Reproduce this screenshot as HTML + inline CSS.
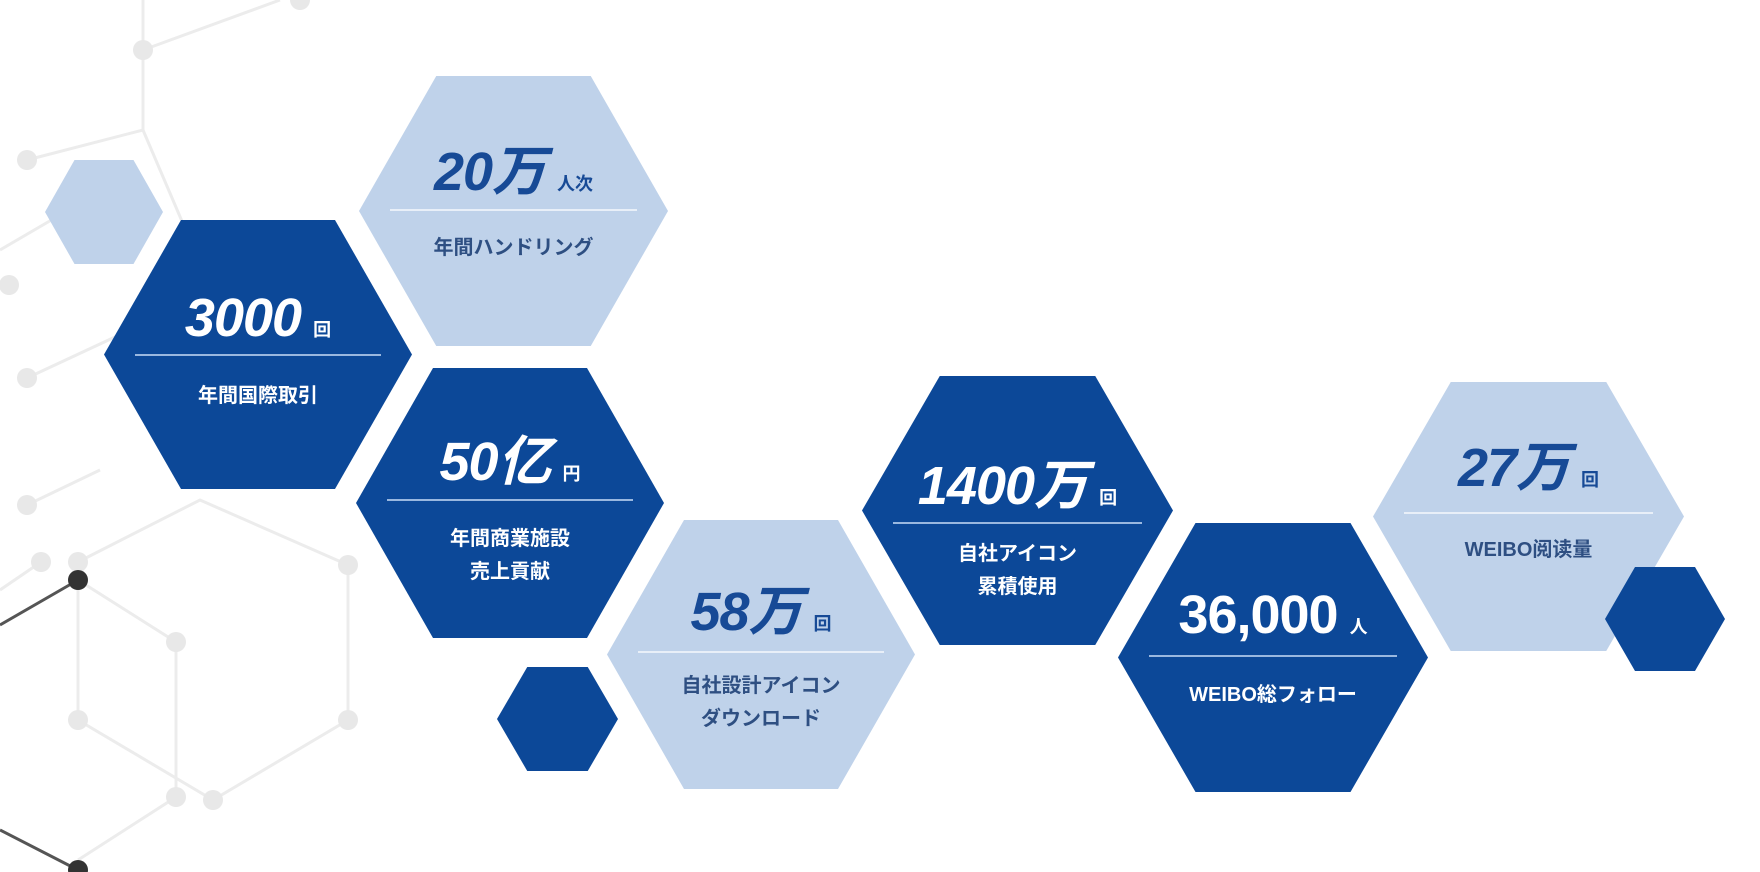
<!DOCTYPE html>
<html><head><meta charset="utf-8"><style>
html,body{margin:0;padding:0;background:#fff;}
body{width:1760px;height:872px;position:relative;overflow:hidden;font-family:"Liberation Sans","Noto Sans CJK JP",sans-serif;}
.h{position:absolute;clip-path:polygon(25% 0,75% 0,100% 50%,75% 100%,25% 100%,0 50%);}
.d{background:#0c4898;color:#fff;}
.l{background:#bfd2ea;color:#1b4a94;}
.n{position:absolute;left:0;right:0;text-align:center;font-weight:bold;font-style:italic;font-size:54px;line-height:60px;letter-spacing:-1px;}
.n small{font-size:18px;font-style:normal;font-weight:bold;margin-left:12px;letter-spacing:0;}
.ln{position:absolute;left:10%;right:10%;height:2px;}
.d .ln{background:#9ab8e0;}
.l .ln{background:#e8eff8;}
.t{position:absolute;left:0;right:0;text-align:center;font-size:20px;line-height:33px;font-weight:bold;}
.l .t{color:#2e4f82;}
</style></head><body>
<svg width="1760" height="872" style="position:absolute;left:0;top:0">
<g stroke="#ececec" stroke-width="3" fill="none">
<path d="M143 0 L143 50 L143 130 M143 50 L280 0 M27 160 L143 130 L190 240 M0 250 L60 215 M27 378 L130 330 M27 505 L100 470 M78 562 L200 500 L348 565 L348 720 L213 800 L78 720 L78 580 L176 642 L176 797 L78 860 M0 590 L41 562"/>
</g>
<g fill="#e8e8e8">
<circle cx="143" cy="50" r="10"/><circle cx="27" cy="160" r="10"/><circle cx="190" cy="240" r="10"/><circle cx="9" cy="285" r="10"/><circle cx="27" cy="378" r="10"/><circle cx="27" cy="505" r="10"/>
<circle cx="41" cy="562" r="10"/><circle cx="78" cy="562" r="10"/><circle cx="176" cy="642" r="10"/><circle cx="78" cy="720" r="10"/><circle cx="176" cy="797" r="10"/><circle cx="213" cy="800" r="10"/><circle cx="348" cy="565" r="10"/><circle cx="348" cy="720" r="10"/><circle cx="300" cy="0" r="10"/>
</g>
<g stroke="#555" stroke-width="3"><path d="M0 625 L78 580 M0 830 L78 870"/></g>
<circle cx="78" cy="580" r="10" fill="#333"/><circle cx="78" cy="870" r="10" fill="#333"/>
</svg>

<div class="h l" style="left:45px;top:160px;width:118px;height:104px"></div>

<div class="h l" style="left:359px;top:76px;width:309px;height:270px">
<div class="n" style="top:66px;color:#174a96">20万<small>人次</small></div>
<div class="ln" style="top:133px"></div>
<div class="t" style="top:156px">年間ハンドリング</div></div>

<div class="h d" style="left:104px;top:220px;width:308px;height:269px">
<div class="n" style="top:68px">3000<small>回</small></div>
<div class="ln" style="top:134px"></div>
<div class="t" style="top:160px">年間国際取引</div></div>

<div class="h d" style="left:356px;top:368px;width:308px;height:270px">
<div class="n" style="top:64px">50亿<small>円</small></div>
<div class="ln" style="top:131px"></div>
<div class="t" style="top:155px">年間商業施設<br>売上貢献</div></div>

<div class="h d" style="left:497px;top:667px;width:121px;height:104px"></div>

<div class="h l" style="left:607px;top:520px;width:308px;height:269px">
<div class="n" style="top:62px;color:#174a96">58万<small>回</small></div>
<div class="ln" style="top:131px"></div>
<div class="t" style="top:150px">自社設計アイコン<br>ダウンロード</div></div>

<div class="h d" style="left:862px;top:376px;width:311px;height:269px">
<div class="n" style="top:80px">1400万<small>回</small></div>
<div class="ln" style="top:146px"></div>
<div class="t" style="top:162px">自社アイコン<br>累積使用</div></div>

<div class="h d" style="left:1118px;top:523px;width:310px;height:269px">
<div class="n" style="top:62px;font-style:normal">36,000<small>人</small></div>
<div class="ln" style="top:132px"></div>
<div class="t" style="top:156px">WEIBO総フォロー</div></div>

<div class="h l" style="left:1373px;top:382px;width:311px;height:269px">
<div class="n" style="top:56px;color:#174a96">27万<small>回</small></div>
<div class="ln" style="top:130px"></div>
<div class="t" style="top:152px">WEIBO阅读量</div></div>

<div class="h d" style="left:1605px;top:567px;width:120px;height:104px"></div>
</body></html>
